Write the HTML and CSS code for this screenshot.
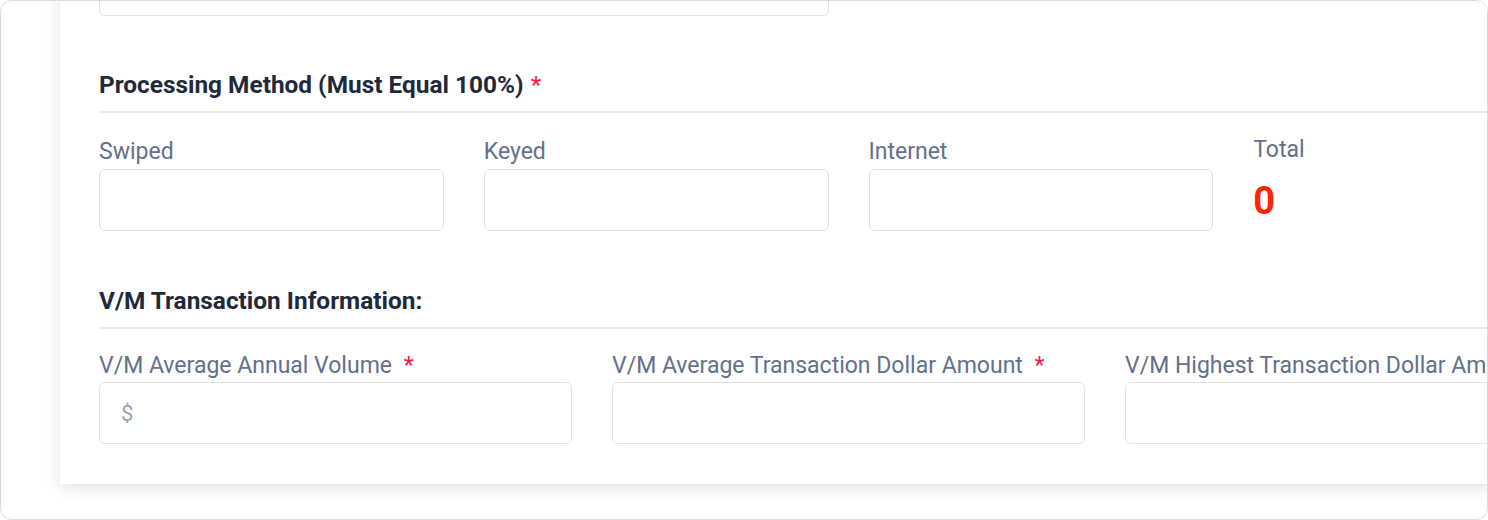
FILE: index.html
```html
<!DOCTYPE html>
<html lang="en">
<head>
<meta charset="utf-8">
<title>Processing Method</title>
<link rel="stylesheet" href="styles.css">
</head>
<body>
<div class="frame">
  <div class="card">
    <div class="top-field">
      <div class="input"></div>
    </div>

    <h3 class="section-title first">Processing Method (Must Equal 100%) <span class="req">*</span></h3>
    <div class="grid grid-4 row-one">
      <div class="field">
        <label class="label">Swiped</label>
        <div class="input"></div>
      </div>
      <div class="field">
        <label class="label">Keyed</label>
        <div class="input"></div>
      </div>
      <div class="field">
        <label class="label">Internet</label>
        <div class="input"></div>
      </div>
      <div class="field total">
        <span class="label total-label">Total</span>
        <span class="total-value">0</span>
      </div>
    </div>

    <h3 class="section-title second">V/M Transaction Information:</h3>
    <div class="grid grid-3 row-two">
      <div class="field">
        <label class="label">V/M Average Annual Volume <span class="req">*</span></label>
        <div class="input"><span class="placeholder">$</span></div>
      </div>
      <div class="field">
        <label class="label">V/M Average Transaction Dollar Amount <span class="req">*</span></label>
        <div class="input"></div>
      </div>
      <div class="field">
        <label class="label">V/M Highest Transaction Dollar Amount <span class="req">*</span></label>
        <div class="input"></div>
      </div>
    </div>
  </div>
</div>
</body>
</html>
```

FILE: styles.css
```css
* { box-sizing: border-box; }

html, body {
  margin: 0;
  padding: 0;
  background: #ffffff;
}

body {
  font-family: Roboto, "Liberation Sans", Arial, sans-serif;
  width: 1488px;
  height: 520px;
  overflow: hidden;
}

.frame {
  width: 1488px;
  height: 520px;
  border: 1px solid #dadbdd;
  border-radius: 12px;
  overflow: hidden;
  background: #ffffff;
  display: flex;
  align-items: flex-start;
}

.card {
  flex: 0 0 1578px;
  width: 1578px;
  margin-top: -47px;
  margin-left: 59px;
  padding: 0 40px 40px 39px;
  background: #ffffff;
  box-shadow: 0 3px 14px rgba(15, 23, 42, 0.13);
}

.top-field {
  width: 730px;
}

.grid {
  display: grid;
  column-gap: 40px;
}

.grid-4 { grid-template-columns: repeat(4, 1fr); }
.grid-3 { grid-template-columns: repeat(3, 1fr); }

.row-one { margin-top: 25px; }
.row-two { margin-top: 23px; }

.field {
  display: flex;
  flex-direction: column;
  min-width: 0;
}

.label {
  font-size: 23px;
  line-height: 28px;
  font-weight: 400;
  color: #62708a;
  margin-bottom: 3px;
  white-space: nowrap;
  overflow: hidden;
}

.row-two .label {
  margin-bottom: 2px;
}

.label .req {
  margin-left: 6px;
}

.req {
  color: #f0164f;
}

.input {
  height: 62px;
  border: 1px solid #dfe3ea;
  border-radius: 6px;
  background: #ffffff;
  display: flex;
  align-items: center;
  padding: 0 21px;
}

.placeholder {
  font-size: 22px;
  color: #9aa2b1;
}

.section-title {
  margin: 0;
  padding-bottom: 10px;
  border-bottom: 2px solid #e6e9ee;
  font-size: 24.4px;
  line-height: 32px;
  font-weight: 700;
  color: #1e2a3b;
}

.section-title.first { margin-top: 53px; }
.section-title.second { margin-top: 54px; }

.section-title .req {
  font-weight: 400;
  margin-left: 1px;
}

.total-label {
  margin-top: -2px;
}

.total-value {
  margin-top: 12px;
  font-size: 38px;
  line-height: 44px;
  font-weight: 700;
  color: #ff2500;
}
```
